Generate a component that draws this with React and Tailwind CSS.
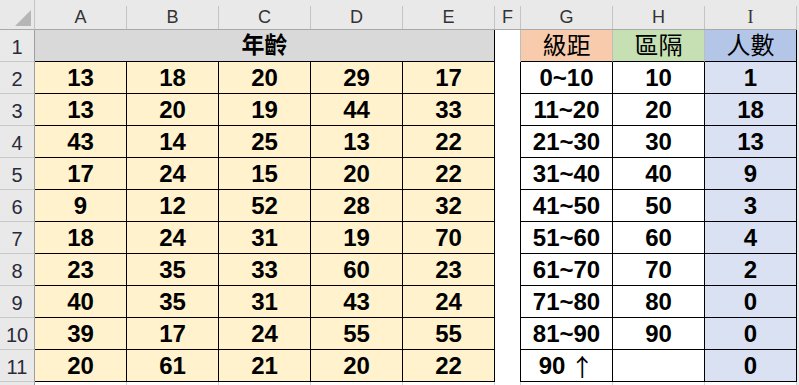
const cols = ['A', 'B', 'C', 'D', 'E', 'F', 'G', 'H', 'I'];

const ages = [
  [13, 18, 20, 29, 17],
  [13, 20, 19, 44, 33],
  [43, 14, 25, 13, 22],
  [17, 24, 15, 20, 22],
  [9, 12, 52, 28, 32],
  [18, 24, 31, 19, 70],
  [23, 35, 33, 60, 23],
  [40, 35, 31, 43, 24],
  [39, 17, 24, 55, 55],
  [20, 61, 21, 20, 22],
];

const bins = [
  ['0~10', '10', '1'],
  ['11~20', '20', '18'],
  ['21~30', '30', '13'],
  ['31~40', '40', '9'],
  ['41~50', '50', '3'],
  ['51~60', '60', '4'],
  ['61~70', '70', '2'],
  ['71~80', '80', '0'],
  ['81~90', '90', '0'],
  ['90', '', '0'],
];

const cell = 'flex items-center justify-center border-r border-b border-black text-[24px] font-bold text-black leading-none';

function RowNum({ n }) {
  return (
    <div className="flex items-center justify-center border-r border-b border-r-[#9e9e9e] border-b-[#c8c8c8] bg-[#e9e9e9] pt-[2px] text-[20px] text-[#2a2a3a]">
      {n}
    </div>
  );
}

export default function App() {
  return (
    <div className="h-[385px] w-[799px] overflow-hidden bg-[#e9e9e9] font-['Liberation_Sans','Noto_Sans_CJK_TC',sans-serif]">
      <div className="grid w-[797px] grid-cols-[35px_92px_92px_92px_92px_92px_26px_92px_92px_92px] grid-rows-[30px] auto-rows-[32px] bg-white">
        {/* column headers */}
        <div className="relative border-r border-b border-r-[#c4c4c4] border-b-[#a9a9a9] bg-[#e9e9e9]">
          <svg className="absolute left-[15px] top-[10px]" width="16" height="16" viewBox="0 0 16 16">
            <polygon points="16,0 16,16 0,16" fill="#b6b6b6" />
          </svg>
        </div>
        {cols.map((c) => (
          <div key={c} className="border-b border-[#a9a9a9] bg-[#e9e9e9] pt-[6px]">
            <div
              className={`flex h-full items-center justify-center border-r border-[#c4c4c4] text-[18px] text-[#333] ${
                c === 'I' ? "font-['Liberation_Serif',serif]" : ''
              }`}
            >
              {c}
            </div>
          </div>
        ))}

        {/* row 1 */}
        <RowNum n={1} />
        <div className="col-span-5 flex items-center justify-center border-r border-b border-black bg-[#d9d9d9] text-[23px] font-bold text-black">
          年齡
        </div>
        <div className="border-r border-[#bdbdbd] bg-white" />
        <div className="flex items-center justify-center border-r border-b border-r-[#bdbdbd] border-b-black bg-[#f8cbad] text-[24px] text-black">
          級距
        </div>
        <div className="flex items-center justify-center border-r border-b border-r-[#bdbdbd] border-b-black bg-[#c6e0b4] text-[24px] text-black">
          區隔
        </div>
        <div className="flex items-center justify-center border-r border-b border-black bg-[#b4c6e7] text-[24px] text-black">
          人數
        </div>

        {/* data rows */}
        {ages.map((row, i) => (
          <div key={i} className="contents">
            <RowNum n={i + 2} />
            {row.map((v, j) => (
              <div key={j} className={`${cell} bg-[#fff2cc]`}>
                {v}
              </div>
            ))}
            <div className="border-r border-black bg-white" />
            <div className={`${cell} bg-white`}>
              {bins[i][0]}
              {i === 9 && (
                <span className="ml-[5px] font-['Noto_Sans_CJK_TC',sans-serif] text-[24px] font-normal">↑</span>
              )}
            </div>
            <div className={`${cell} bg-white`}>{bins[i][1]}</div>
            <div className={`${cell} bg-[#d9e1f2]`}>{bins[i][2]}</div>
          </div>
        ))}

        {/* partial row 12 */}
        <div className="border-r border-[#9e9e9e] bg-[#e9e9e9]" />
        {cols.map((c) => (
          <div key={c} className="border-r border-[#d4d4d4] bg-white" />
        ))}
      </div>
    </div>
  );
}
